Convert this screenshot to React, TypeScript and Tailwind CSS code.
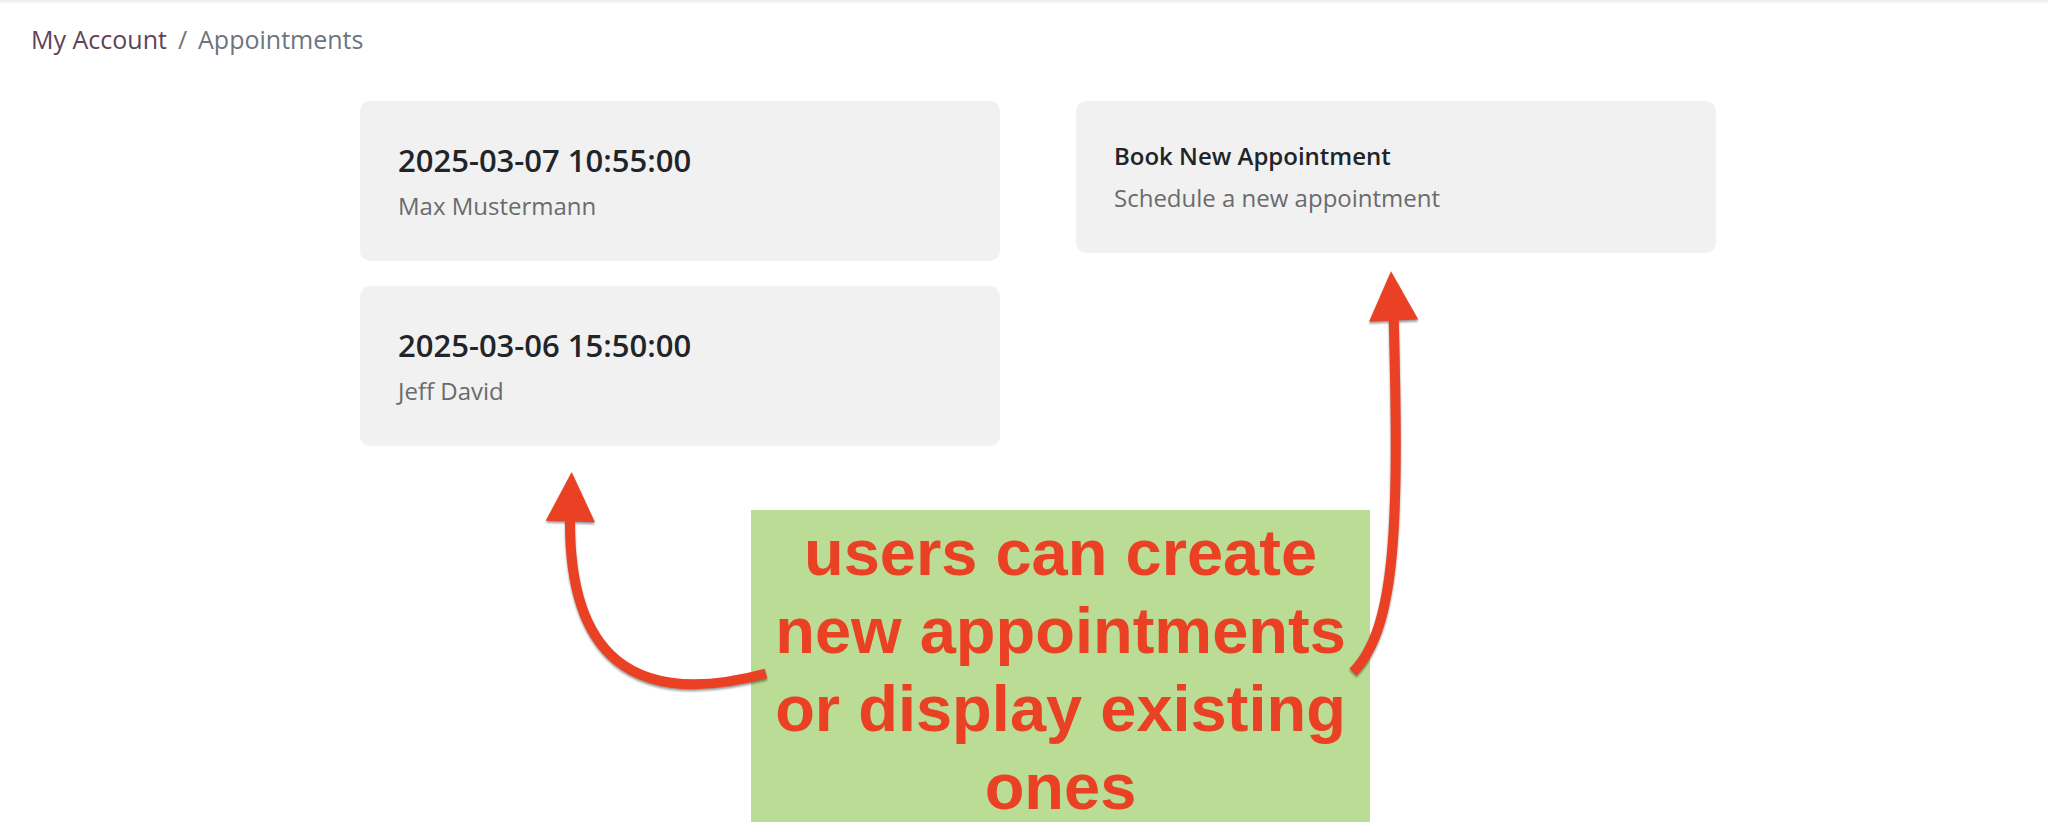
const appointments = [
  { time: '2025-03-07 10:55:00', name: 'Max Mustermann' },
  { time: '2025-03-06 15:50:00', name: 'Jeff David' },
];

function Breadcrumb() {
  return (
    <nav aria-label="Breadcrumb" className="px-[31px] text-[25px] leading-[38px]">
      <ol className="flex gap-[11px] text-[#6c757d]">
        <li>
          <a href="#account" className="text-[#5f4358]">
            My Account
          </a>
        </li>
        <li aria-hidden="true">/</li>
        <li aria-current="page">Appointments</li>
      </ol>
    </nav>
  );
}

function Arrows() {
  return (
    <svg
      aria-hidden="true"
      viewBox="541 266 885 430"
      className="pointer-events-none absolute -top-[244px] -left-[210px] h-[430px] w-[885px] max-w-none drop-shadow-[0_2px_1px_rgba(0,0,0,0.4)]"
    >
      <g fill="none" stroke="#ea4125" strokeWidth="10">
        <path d="M570 519C569 652 629 710 766 673.5" />
        <path d="M1393.7 318C1399 520 1397 628 1353 672" />
      </g>
      <g fill="#ea4125">
        <path d="M571.7 472L545.7 520.7L595 522.3Z" />
        <path d="M1391 271.3L1369 321.8L1418.3 319.5Z" />
      </g>
    </svg>
  );
}

export default function App() {
  return (
    <div className="min-h-screen overflow-hidden bg-white font-['Open_Sans','Noto_Sans',sans-serif] text-[#212529]">
      <div className="h-1 bg-linear-to-b from-[#ececec] to-white" />
      <header className="pt-4">
        <Breadcrumb />
      </header>
      <main className="mx-auto mt-[43px] max-w-[1384px] pl-7">
        <div className="grid grid-cols-2 items-start gap-[76px]">
          <section aria-label="Appointments" className="flex flex-col gap-[25px]">
            {appointments.map((item) => (
              <a key={item.time} href="#appointment" className="block rounded-[10px] bg-[#f1f1f1] px-[38px] pt-10 pb-9">
                <h2 className="mb-2 text-[31px] leading-[38px] font-semibold">{item.time}</h2>
                <p className="text-[24px] leading-[38px] text-[#6a6b6d]">{item.name}</p>
              </a>
            ))}
          </section>
          <a href="#book" className="block rounded-[10px] bg-[#f1f1f1] px-[38px] pt-10 pb-9">
            <h2 className="mb-2 text-[24px] leading-[30px] font-semibold">Book New Appointment</h2>
            <p className="text-[24px] leading-[38px] text-[#6a6b6d]">Schedule a new appointment</p>
          </a>
        </div>
        <div className="mt-16 flex justify-center pl-[45px]">
          <aside className="relative -mb-1 w-[619px] bg-[#badc94] px-5 pt-1">
            <p className="text-center font-['Liberation_Sans',sans-serif] text-[65px] leading-[78px] font-bold text-[#ea4125]">
              users can create new appointments or display existing ones
            </p>
            <Arrows />
          </aside>
        </div>
      </main>
    </div>
  );
}
